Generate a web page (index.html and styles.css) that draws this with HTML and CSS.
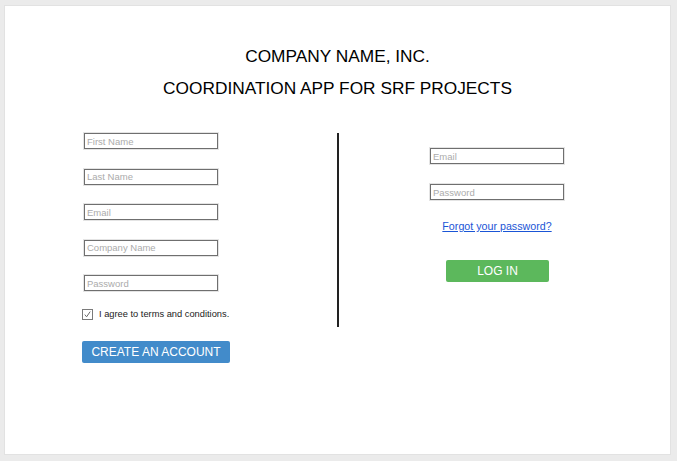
FILE: index.html
```html
<!DOCTYPE html>
<html>
<head>
<meta charset="utf-8">
<link rel="stylesheet" href="styles.css">
</head>
<body>
<div class="card">
  <h1 class="title">COMPANY NAME, INC.</h1>
  <h2 class="subtitle">COORDINATION APP FOR SRF PROJECTS</h2>
  <div class="forms">
    <div class="signup">
      <div class="fields">
        <input class="field" type="text" placeholder="First Name">
        <input class="field" type="text" placeholder="Last Name">
        <input class="field" type="text" placeholder="Email">
        <input class="field" type="text" placeholder="Company Name">
        <input class="field" type="password" placeholder="Password">
      </div>
      <label class="agree">
        <span class="check"><svg width="11" height="11" viewBox="0 0 11 11"><rect x="0.5" y="0.5" width="10" height="10" fill="#fff" stroke="#7a7a7a"/><path d="M2.8 5.6 L4.6 7.8 L8.2 2.6" fill="none" stroke="#6a6a6a" stroke-width="1"/></svg></span>
        <span class="agree-text">I agree to terms and conditions.</span>
      </label>
      <button class="btn btn-create">CREATE AN ACCOUNT</button>
    </div>
    <div class="divider"></div>
    <div class="login">
      <input class="field" type="text" placeholder="Email">
      <input class="field" type="password" placeholder="Password">
      <a class="forgot" href="#">Forgot your password?</a>
      <button class="btn btn-login">LOG IN</button>
    </div>
  </div>
</div>
</body>
</html>
```
FILE: styles.css
```css
html, body {
  margin: 0;
  padding: 0;
}
body {
  background: #ebebeb;
  padding: 5px 6px 6px 4px;
  font-family: "Liberation Sans", Arial, sans-serif;
}
.card {
  box-sizing: border-box;
  width: 667px;
  height: 450px;
  background: #fff;
  border: 1px solid #e2e2e2;
  padding: 40px 0 0 77px;
}
.title, .subtitle {
  margin: 0;
  font-size: 17.3px;
  line-height: 20px;
  font-weight: normal;
  color: #000;
  text-align: center;
  margin-left: -77px;
}
.subtitle {
  margin-top: 12px;
}
.forms {
  display: flex;
  align-items: flex-start;
  margin-top: 35px;
}
.signup {
  width: 255px;
  display: flex;
  flex-direction: column;
  align-items: flex-start;
}
.fields {
  display: flex;
  flex-direction: column;
  gap: 19.5px;
  margin-left: 2px;
}
.field {
  box-sizing: border-box;
  width: 134px;
  height: 16px;
  margin: 0;
  padding: 0 2px;
  border: 1px solid #6f6f6f;
  border-radius: 0;
  box-shadow: 0 0 0 1px #e4e4e4;
  font-family: "Liberation Sans", Arial, sans-serif;
  font-size: 9.5px;
  color: #333;
  outline: none;
}
.field::placeholder {
  color: #ababab;
}
.agree {
  display: flex;
  align-items: center;
  margin-top: 18px;
  height: 11px;
}
.check {
  display: block;
  width: 11px;
  height: 11px;
}
.check svg {
  display: block;
}
.agree-text {
  margin-left: 6px;
  font-size: 9.3px;
  line-height: 11px;
  color: #222;
}
.btn {
  box-sizing: border-box;
  border: none;
  border-radius: 2px;
  color: #fff;
  font-family: "Liberation Sans", Arial, sans-serif;
  font-size: 12px;
  height: 22px;
  line-height: 22px;
  padding: 0;
  cursor: pointer;
}
.btn-create {
  width: 148px;
  margin-top: 21px;
  background: #428bca;
}
.divider {
  width: 2px;
  height: 194px;
  background: #222;
}
.login {
  margin-left: 91px;
  padding-top: 15px;
  width: 134px;
  display: flex;
  flex-direction: column;
  align-items: center;
}
.login .field + .field {
  margin-top: 20px;
}
.forgot {
  margin-top: 20px;
  font-size: 10.7px;
  line-height: 13px;
  color: #1a55d6;
  text-decoration: underline;
}
.btn-login {
  width: 103px;
  margin-top: 27px;
  margin-left: 1px;
  background: #5cb85c;
}
```
